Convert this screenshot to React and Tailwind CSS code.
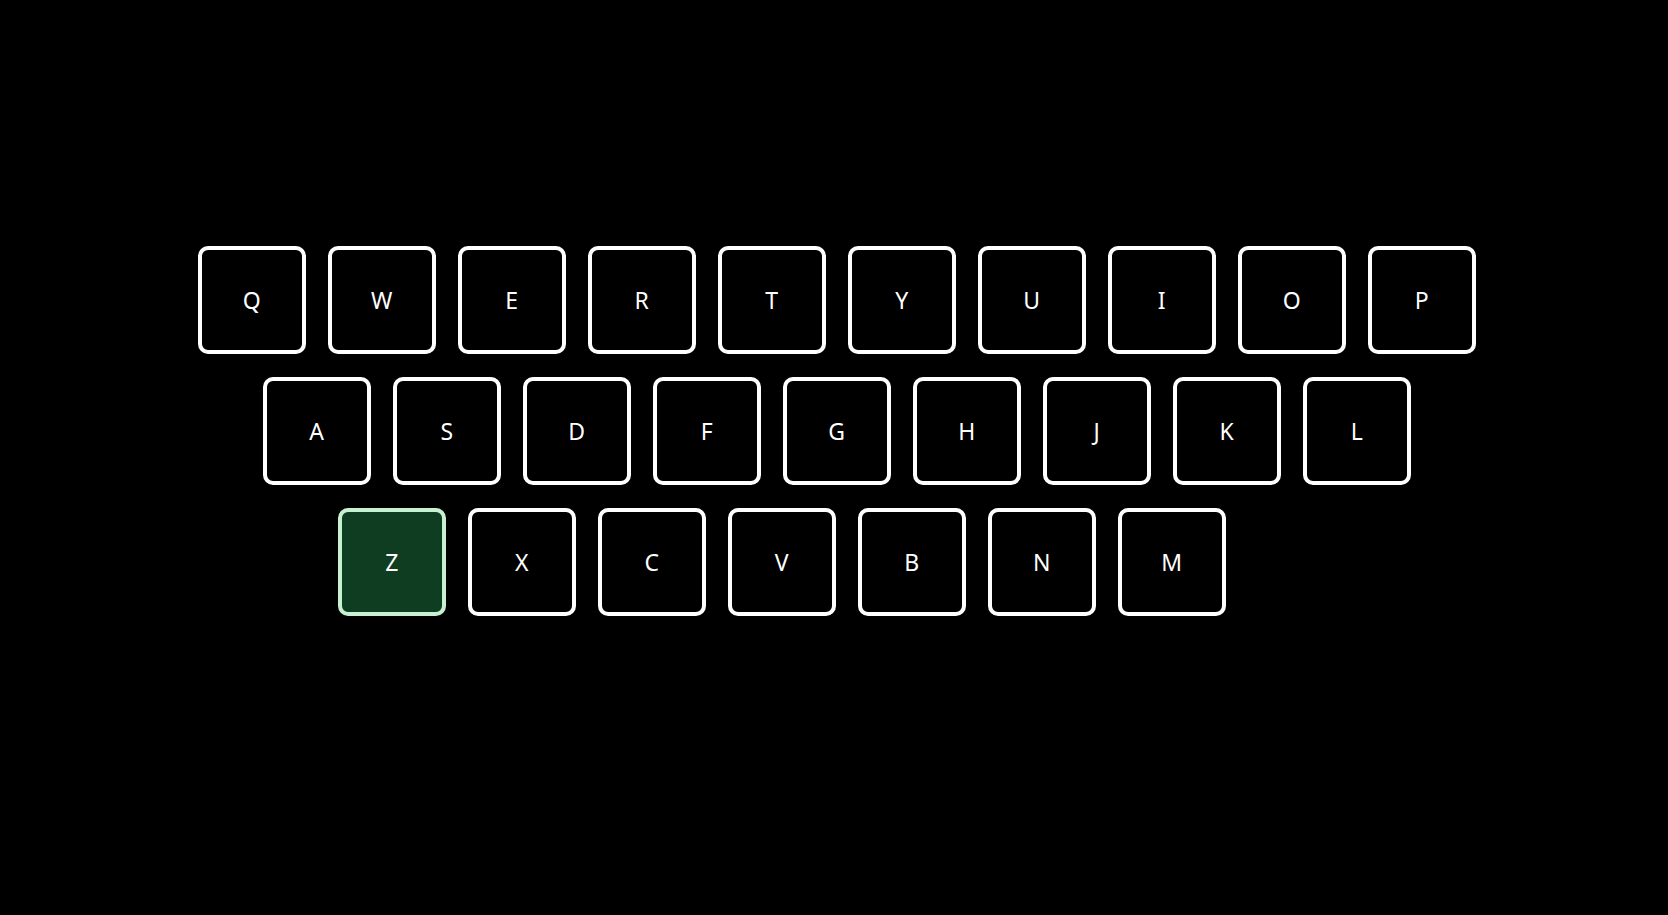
const rows = [
  ['Q', 'W', 'E', 'R', 'T', 'Y', 'U', 'I', 'O', 'P'],
  ['A', 'S', 'D', 'F', 'G', 'H', 'J', 'K', 'L'],
  ['Z', 'X', 'C', 'V', 'B', 'N', 'M'],
]

// row offsets, the bottom row is not centered
const rowPad = ['pl-0', 'pl-[65px]', 'pl-[140px]']

const Key = ({ letter, active }) => (
  <div
    className={
      active
        ? "flex h-[108px] w-[108px] items-center justify-center rounded-[10px] border-4 border-[#c6f1d3] bg-[#0f3d21] text-white"
        : "flex h-[108px] w-[108px] items-center justify-center rounded-[10px] border-4 border-white bg-black text-white"
    }
  >
    <span className="text-[23px] leading-none tracking-wide">{letter}</span>
  </div>
)

export default function App() {
  return (
    <div
      className="min-h-screen w-full bg-black pt-[246px]"
      style={{ fontFamily: '"Noto Sans", "Open Sans", sans-serif' }}
    >
      <div className="flex flex-col gap-[23px] pl-[198px]">
        {rows.map((row, i) => (
          <div key={i} className={`flex gap-[22px] ${rowPad[i]}`}>
            {row.map((l) => (
              <Key key={l} letter={l} active={l === 'Z'} />
            ))}
          </div>
        ))}
      </div>
    </div>
  )
}
